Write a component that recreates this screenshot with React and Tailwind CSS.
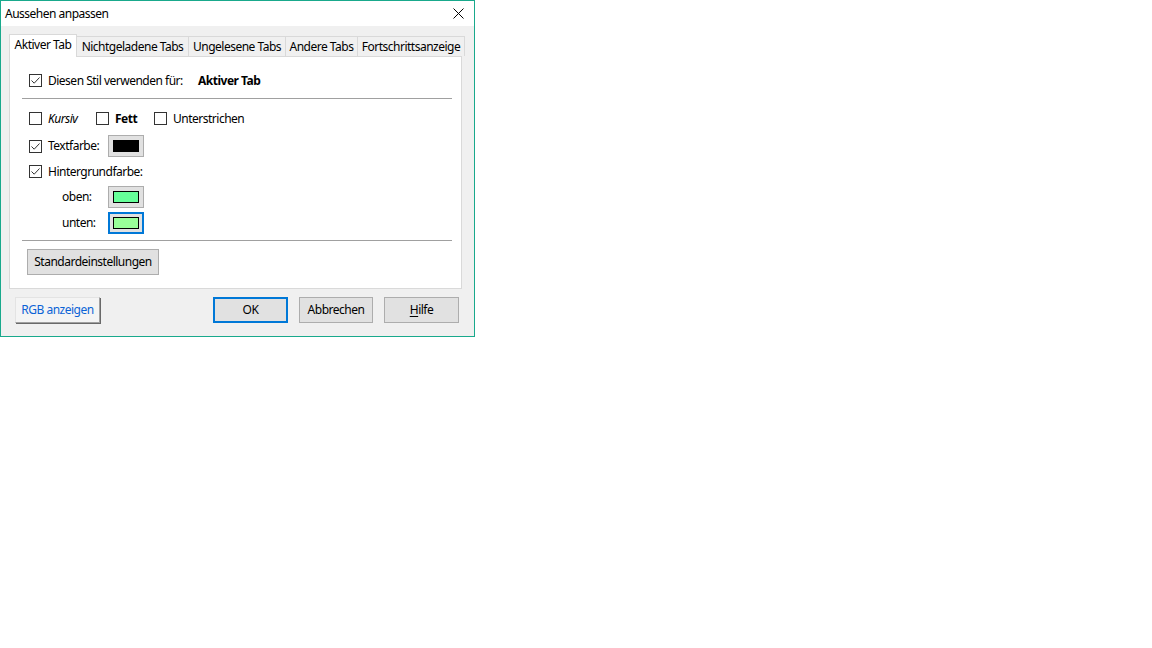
import React from 'react';

const tabs = [
  { label: 'Aktiver Tab', w: 'w-[68px]', active: true },
  { label: 'Nichtgeladene Tabs', w: 'w-[112px]' },
  { label: 'Ungelesene Tabs', w: 'w-[97px]' },
  { label: 'Andere Tabs', w: 'w-[72px]' },
  { label: 'Fortschrittsanzeige', w: 'w-[107px]' },
];

function CheckBox({ checked }) {
  return (
    <span className="w-[13px] h-[13px] shrink-0 border border-[#333333] bg-white flex items-center justify-center">
      {checked && (
        <svg width="11" height="11" viewBox="0 0 11 11">
          <path d="M1.5 5.5 L4.2 8.2 L9.5 2.5" fill="none" stroke="#333333" strokeWidth="1" />
        </svg>
      )}
    </span>
  );
}

// label text sits one pixel lower than the box centre
function Label({ children, className = '' }) {
  return <span className={'ml-[6px] mt-[2px] ' + className}>{children}</span>;
}

function ColorButton({ color, focused, edged }) {
  return (
    <div
      className={
        focused
          ? 'w-[36px] h-[22px] border-2 border-[#0078d7] bg-[#e1e1e1] p-[3px]'
          : 'w-[36px] h-[22px] border border-[#adadad] bg-[#e1e1e1] p-[4px]'
      }
    >
      <div className={edged ? 'w-full h-full border border-black' : 'w-full h-full'} style={{ background: color }} />
    </div>
  );
}

function Button({ children, className = '', focused }) {
  return (
    <div
      className={
        'h-[26px] flex items-center justify-center bg-[#e1e1e1] ' +
        (focused ? 'border-2 border-[#0078d7] ' : 'border border-[#adadad] ') +
        className
      }
    >
      {children}
    </div>
  );
}

export default function App() {
  return (
    <div className="w-[1152px] h-[648px] bg-white text-[12px] tracking-[-0.5px] whitespace-nowrap text-black font-['Noto_Sans',sans-serif] leading-none">
      <div className="w-[475px] h-[337px] border border-[#19a98c] bg-[#f0f0f0] flex flex-col">
        {/* title bar */}
        <div className="h-[25px] bg-white flex items-center pl-[4px] pr-[10px]">
          <span>Aussehen anpassen</span>
          <svg className="ml-auto" width="11" height="11" viewBox="0 0 11 11">
            <path d="M0.5 0.5 L10.5 10.5 M10.5 0.5 L0.5 10.5" stroke="#000" strokeWidth="1" />
          </svg>
        </div>

        <div className="px-[8px] pt-[8px]">
          {/* tab strip */}
          <div className="flex items-end h-[22px]">
            {tabs.map((t) =>
              t.active ? (
                <div
                  key={t.label}
                  className={`${t.w} h-[23px] -mb-px relative z-10 bg-white border border-b-0 border-[#d9d9d9] flex items-center justify-center pb-[2px]`}
                >
                  {t.label}
                </div>
              ) : (
                <div
                  key={t.label}
                  className={`${t.w} h-[20px] bg-[#f0f0f0] border border-l-0 border-b-0 border-[#d9d9d9] flex items-center justify-center`}
                >
                  {t.label}
                </div>
              )
            )}
          </div>

          {/* tab page */}
          <div className="w-[453px] h-[233px] bg-white border border-[#d9d9d9]">
            <div className="mt-[13px] h-[20px] pl-[19px] flex items-center">
              <CheckBox checked />
              <Label className="w-[150px]">Diesen Stil verwenden für:</Label>
              <span className="mt-[2px] font-bold">Aktiver Tab</span>
            </div>

            <div className="mt-[8px] h-px ml-[12px] mr-[9px] bg-[#a0a0a0]" />

            <div className="mt-[9px] h-[20px] pl-[19px] flex items-center">
              <div className="w-[67px] flex items-center">
                <CheckBox />
                <Label className="italic">Kursiv</Label>
              </div>
              <div className="w-[58px] flex items-center">
                <CheckBox />
                <Label className="font-bold">Fett</Label>
              </div>
              <div className="flex items-center">
                <CheckBox />
                <Label>Unterstrichen</Label>
              </div>
            </div>

            <div className="mt-[7px] h-[22px] pl-[19px] flex items-center">
              <div className="w-[79px] flex items-center">
                <CheckBox checked />
                <span className="ml-[6px]">Textfarbe:</span>
              </div>
              <ColorButton color="#000000" />
            </div>

            <div className="mt-[4px] h-[20px] pl-[19px] flex items-center">
              <CheckBox checked />
              <Label>Hintergrundfarbe:</Label>
            </div>

            <div className="mt-[5px] h-[22px] pl-[52px] flex items-center">
              <span className="w-[46px]">oben:</span>
              <ColorButton color="#66ff99" edged />
            </div>

            <div className="mt-[4px] h-[22px] pl-[52px] flex items-center">
              <span className="w-[46px]">unten:</span>
              <ColorButton color="#99ff99" edged focused />
            </div>

            <div className="mt-[6px] h-px ml-[12px] mr-[9px] bg-[#a0a0a0]" />

            <Button className="mt-[8px] ml-[17px] w-[132px]">Standardeinstellungen</Button>
          </div>

          {/* dialog buttons */}
          <div className="mt-[8px] flex items-center">
            <div className="ml-[6px] w-[85px] h-[26px] flex items-center justify-center bg-[#f4f4f4] border border-t-[#e3e3e3] border-l-[#e3e3e3] border-r-[#a0a0a0] border-b-[#a0a0a0] shadow-[1px_1px_0_#696969] text-[#0b63d6]">
              RGB anzeigen
            </div>
            <Button focused className="ml-auto w-[75px]">OK</Button>
            <Button className="ml-[11px] w-[74px]">Abbrechen</Button>
            <Button className="ml-[11px] mr-[7px] w-[75px]">
              <span>
                <span className="underline underline-offset-2">H</span>ilfe
              </span>
            </Button>
          </div>
        </div>
      </div>
    </div>
  );
}
